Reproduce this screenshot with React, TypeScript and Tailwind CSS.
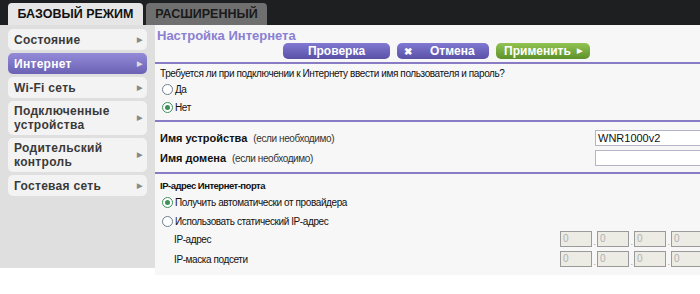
import React from "react";

const navItems = [
    { label: "Состояние" },
    { label: "Интернет", active: true },
    { label: "Wi-Fi сеть" },
    { label: "Подключенные устройства", tall: true },
    { label: "Родительский контроль", tall: true },
    { label: "Гостевая сеть" },
];

function Radio({ checked }: { checked?: boolean }) {
    return (
        <span
            className={`inline-flex w-[11px] h-[11px] rounded-full border items-center justify-center bg-white mr-[2px] ${
                checked ? "border-[#3f8f5a]" : "border-[#6f7f8f]"
            }`}
        >
            {checked && <span className="w-[5px] h-[5px] rounded-full bg-[#3f8f5a]" />}
        </span>
    );
}

function IpBoxes() {
    return (
        <div className="flex items-end">
            {[0, 1, 2, 3].map((i) => (
                <div key={i} className="flex items-end">
                    {i > 0 && <span className="w-[5px] text-center text-[9px] leading-[9px] text-[#999]">.</span>}
                    <div className="w-[32px] h-[16px] border border-[#9a9a9a] bg-[#ecebe4] text-[10px] leading-[14px] text-[#b0b0b0] pl-[2px]">
                        0
                    </div>
                </div>
            ))}
        </div>
    );
}

export default function App() {
    return (
        <div className="w-[700px] h-[294px] overflow-hidden bg-white font-['Liberation_Sans',Arial,sans-serif]">
            {/* Top tabs */}
            <div className="h-[25px] bg-[#1d1f21] flex items-end pl-[8px] gap-[3px]">
                <div className="h-[22px] w-[135px] rounded-t-[4px] bg-[#e6e6e6] flex items-center justify-center text-[12.5px] font-bold text-[#111]">
                    БАЗОВЫЙ РЕЖИМ
                </div>
                <div className="h-[22px] w-[121px] rounded-t-[4px] bg-[#6f6f6f] flex items-center justify-center text-[12.5px] font-bold text-[#1a1a1a]">
                    РАСШИРЕННЫЙ
                </div>
            </div>

            <div className="flex">
                {/* Sidebar */}
                <div className="w-[155px] h-[243px] shrink-0 bg-[#dfdfdf] px-[8px] pt-[4px] flex flex-col gap-[3px]">
                    {navItems.map((item) => (
                        <div
                            key={item.label}
                            className={`flex items-center justify-between rounded-[5px] pl-[6px] pr-[5px] text-[12px] leading-[14px] font-bold tracking-[0.3px] ${
                                item.tall ? "h-[34px]" : "h-[21px]"
                            } ${
                                item.active
                                    ? "bg-gradient-to-b from-[#948ad8] to-[#6c62b4] text-white"
                                    : "bg-[#f3f3f3] text-[#3a3a3a]"
                            }`}
                        >
                            <span className={item.tall ? "w-[100px]" : ""}>{item.label}</span>
                            <span className={`text-[7px] ${item.active ? "text-[#ddd]" : "text-[#888]"}`}>▶</span>
                        </div>
                    ))}
                </div>

                {/* Main */}
                <div className="flex-1 h-[250px] bg-[#f7f7f7] text-[10px] tracking-[-0.4px] text-[#111]">
                    <div className="pt-[3px] pl-[2px] text-[13px] leading-[15px] tracking-normal font-bold text-[#8a80d2]">
                        Настройка Интернета
                    </div>

                    <div className="flex pl-[128px] gap-[7px] h-[16px] text-[12px] tracking-normal font-bold text-white">
                        <div className="w-[107px] rounded-[5px] bg-gradient-to-b from-[#8179d2] to-[#5a51a6] flex items-center justify-center">
                            Проверка
                        </div>
                        <div className="w-[92px] rounded-[5px] bg-gradient-to-b from-[#8179d2] to-[#5a51a6] flex items-center pl-[7px]">
                            <span className="text-[10px]">✖</span>
                            <span className="ml-[18px]">Отмена</span>
                        </div>
                        <div className="w-[94px] rounded-[5px] bg-gradient-to-b from-[#92c452] to-[#5d9229] flex items-center justify-center gap-[6px]">
                            <span>Применить</span>
                            <span className="text-[7px]">▶</span>
                        </div>
                    </div>

                    <div className="mt-[3px] h-[2px] bg-[#8a7cc4]" />

                    <div className="pl-[5px]">
                        <div className="mt-[3px] h-[14px] leading-[14px]">
                            Требуется ли при подключении к Интернету ввести имя пользователя и пароль?
                        </div>
                        <div className="mt-[1px] h-[14px] flex items-center pl-[2px]">
                            <Radio />
                            <span>Да</span>
                        </div>
                        <div className="mt-[4px] h-[14px] flex items-center pl-[2px]">
                            <Radio checked />
                            <span>Нет</span>
                        </div>
                    </div>

                    <div className="mt-[6px] h-[2px] bg-[#8a7cc4]" />

                    <div className="mt-[8px] h-[16px] flex items-center">
                        <div className="w-[440px] shrink-0 pl-[5px]">
                            <span className="font-bold text-[11px] tracking-normal">Имя устройства</span>
                            <span className="ml-[6px] text-[#333]">(если необходимо)</span>
                        </div>
                        <div className="w-[110px] shrink-0 h-[16px] border border-[#b4b4c4] bg-white text-[11px] tracking-normal leading-[14px] pl-[2px] text-[#111]">
                            WNR1000v2
                        </div>
                    </div>
                    <div className="mt-[4px] h-[16px] flex items-center">
                        <div className="w-[440px] shrink-0 pl-[5px]">
                            <span className="font-bold text-[11px] tracking-normal">Имя домена</span>
                            <span className="ml-[6px] text-[#333]">(если необходимо)</span>
                        </div>
                        <div className="w-[110px] shrink-0 h-[16px] border border-[#b4b4c4] bg-white" />
                    </div>

                    <div className="mt-[6px] h-[2px] bg-[#8a7cc4]" />

                    <div className="pl-[5px]">
                        <div className="mt-[5px] h-[14px] leading-[14px] font-bold text-[9.5px] tracking-[-0.5px]">
                            IP-адрес Интернет-порта
                        </div>
                        <div className="mt-[2px] h-[14px] flex items-center pl-[2px]">
                            <Radio checked />
                            <span>Получить автоматически от провайдера</span>
                        </div>
                        <div className="mt-[5px] h-[14px] flex items-center pl-[2px]">
                            <Radio />
                            <span>Использовать статический IP-адрес</span>
                        </div>
                    </div>

                    <div className="mt-[3px] h-[16px] flex items-center">
                        <div className="w-[405px] shrink-0 pl-[19px]">IP-адрес</div>
                        <IpBoxes />
                    </div>
                    <div className="mt-[4px] h-[16px] flex items-center">
                        <div className="w-[405px] shrink-0 pl-[19px]">IP-маска подсети</div>
                        <IpBoxes />
                    </div>
                </div>
            </div>
        </div>
    );
}
